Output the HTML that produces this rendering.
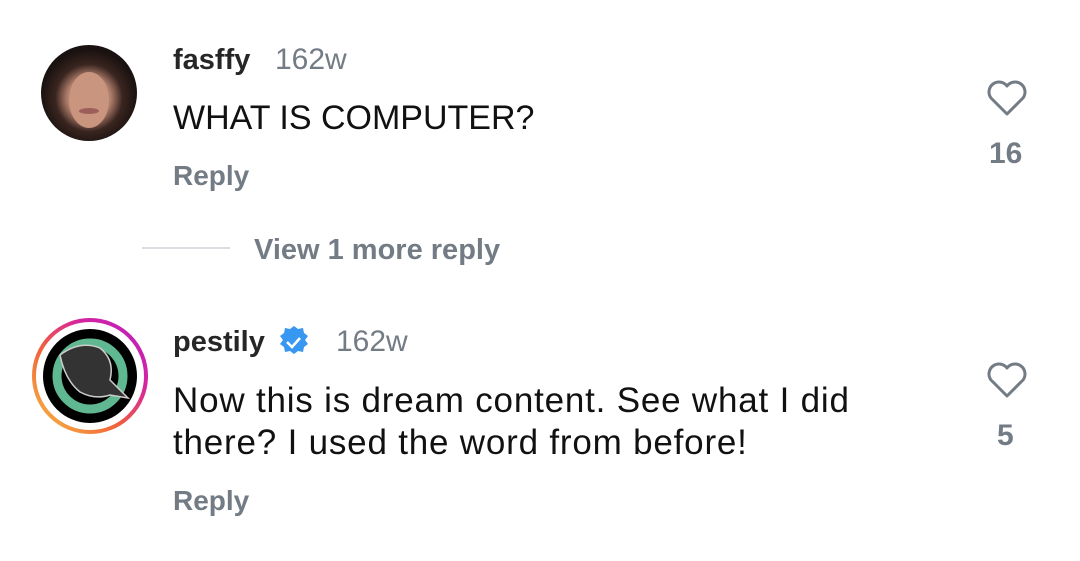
<!DOCTYPE html>
<html><head><style>
body{margin:0;width:1080px;height:561px;background:#fff;position:relative;overflow:hidden;font-family:"Liberation Sans",Arial,sans-serif}
.t{position:absolute;white-space:nowrap;line-height:1}
.u{font-size:29px;font-weight:bold;color:#262626}
.w{font-size:30px;color:#737b85}
.c{font-size:35px;color:#111;letter-spacing:0.8px}
.r{font-size:28px;color:#737b85;font-weight:bold}
.n{font-size:30px;color:#737b85;font-weight:bold}
</style></head><body>
<svg width="1080" height="561" style="position:absolute;left:0;top:0">
<defs>
<radialGradient id="face" cx="50%" cy="55%" r="50%"><stop offset="0" stop-color="#d9aa96"/><stop offset="0.45" stop-color="#b07f6c"/><stop offset="0.7" stop-color="#3a2520"/><stop offset="1" stop-color="#1a1210"/></radialGradient>
<linearGradient id="ring" x1="0" y1="1" x2="1" y2="0"><stop offset="0" stop-color="#f7c043"/><stop offset="0.4" stop-color="#f0613a"/><stop offset="0.7" stop-color="#d6249f"/><stop offset="1" stop-color="#b520c6"/></linearGradient>
</defs>
<circle cx="89" cy="93" r="48" fill="url(#face)"/>
<ellipse cx="89" cy="100" rx="20" ry="28" fill="#c9957f"/>
<ellipse cx="89" cy="111" rx="10" ry="3" fill="#9c5e5a"/>
<circle cx="90" cy="376" r="56" fill="none" stroke="url(#ring)" stroke-width="4"/>
<circle cx="90" cy="376" r="47" fill="#000"/>
<circle cx="90" cy="376" r="33" fill="none" stroke="#5fb892" stroke-width="9"/>
<path d="M60 355 Q80 340 100 348 Q115 360 110 380 L128 398 L110 395 Q95 400 80 392 Q65 380 60 355Z" fill="#333" stroke="#ccc" stroke-width="1.5"/>
<line x1="142" y1="248" x2="230" y2="248" stroke="#dadde1" stroke-width="2"/>
<path d="M1007 114 L991 98 A9.5 9.5 0 0 1 1007 86 A9.5 9.5 0 0 1 1023 98 Z" fill="none" stroke="#737b85" stroke-width="3" stroke-linejoin="round"/>
<path d="M1007 396 L991 380 A9.5 9.5 0 0 1 1007 368 A9.5 9.5 0 0 1 1023 380 Z" fill="none" stroke="#737b85" stroke-width="3" stroke-linejoin="round"/>
<path d="M294 326 l4 3 5 -1 1 5 4 3 -3 4 3 4 -4 3 -1 5 -5 -1 -4 3 -4 -3 -5 1 -1 -5 -4 -3 3 -4 -3 -4 4 -3 1 -5 5 1Z" fill="#3897f0"/>
<path d="M287 342 l5 5 8 -9" fill="none" stroke="#fff" stroke-width="2.5"/>
</svg>
<div class="t u" style="left:173px;top:46px">fasffy</div>
<div class="t w" style="left:275px;top:45px">162w</div>
<div class="t c" style="left:173px;top:101px;font-size:34px;letter-spacing:0">WHAT IS COMPUTER?</div>
<div class="t r" style="left:173px;top:162px">Reply</div>
<div class="t r" style="left:254px;top:236px;font-size:29px">View 1 more reply</div>
<div class="t n" style="left:989px;top:139px">16</div>
<div class="t u" style="left:173px;top:328px">pestily</div>
<div class="t w" style="left:336px;top:327px">162w</div>
<div class="t c" style="left:173px;top:383px">Now this is dream content. See what I did</div>
<div class="t c" style="left:173px;top:425px">there? I used the word from before!</div>
<div class="t r" style="left:173px;top:487px">Reply</div>
<div class="t n" style="left:997px;top:421px">5</div>
</body></html>
